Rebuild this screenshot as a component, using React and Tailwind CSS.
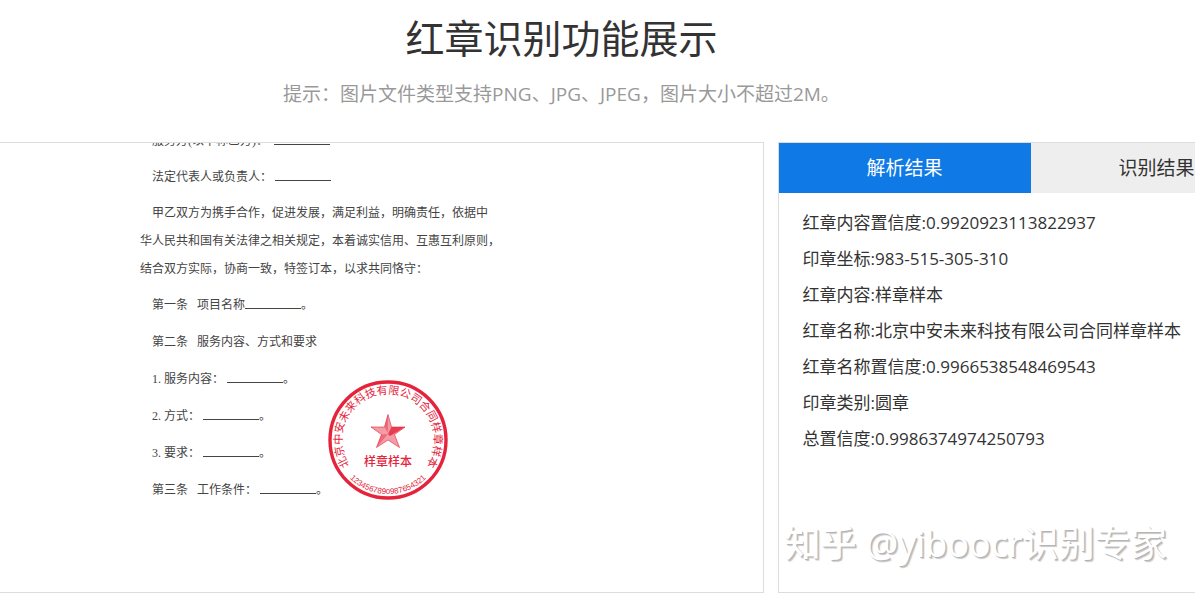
import clsx from 'clsx';

const tabs = ['解析结果', '识别结果'];

const results = [
    { label: '红章内容置信度', value: '0.9920923113822937' },
    { label: '印章坐标', value: '983-515-305-310' },
    { label: '红章内容', value: '样章样本' },
    { label: '红章名称', value: '北京中安未来科技有限公司合同样章样本' },
    { label: '红章名称置信度', value: '0.9966538548469543' },
    { label: '印章类别', value: '圆章' },
    { label: '总置信度', value: '0.9986374974250793' },
];

// Underlined space left open in the contract
const Blank = () => (
    <span className="inline-block w-14 h-3 border-b border-[#444]"></span>
);

const Seal = () => (
    <svg viewBox="0 0 120 120" className="w-[120px] h-[120px]" fill="#e5243b">
        <defs>
            <path id="seal-name" d="M 24.8 89.6 A 46 46 0 1 1 95.2 89.6" />
            <path id="seal-code" d="M 13.2 87 A 54 54 0 0 0 106.8 87" />
        </defs>
        <circle cx="60" cy="60" r="58" fill="none" stroke="#e5243b" strokeWidth="3.4" />
        <text fontSize="11">
            <textPath href="#seal-name" startOffset="50%" textAnchor="middle">北京中安未来科技有限公司合同样章样本</textPath>
        </text>
        <polygon
            points="60,34.5 63.5,47 77,47 66.5,54.5 71.5,67.5 60,60 48.5,67.5 53.5,54.5 43,47 56.5,47"
            fillOpacity="0.45"
            stroke="#e5243b"
            strokeOpacity="0.6"
            strokeWidth="1"
        />
        <path d="M60 54 L63.5 47 L77 47 L67 53 L62 56 Z" fillOpacity="0.8" />
        <path d="M60 53 L60 34.5 L56.5 47 Z M60 54 L48.5 67.5 L53.5 54.5 Z" fillOpacity="0.4" />
        <text x="60" y="86" fontSize="12" fontWeight="500" textAnchor="middle">样章样本</text>
        <text fontSize="8" className="font-['Liberation_Sans',sans-serif]">
            <textPath href="#seal-code" startOffset="50%" textAnchor="middle">1234567890987654321</textPath>
        </text>
    </svg>
);

const Contract = () => (
    <div className="relative pl-[140px] text-xs text-[#444] whitespace-nowrap font-['Liberation_Serif','Noto_Sans_CJK_SC',serif]">
        <div className="pl-3 -mt-3.5">
            <p className="h-[30px] leading-6">服务方(以下称乙方)：&nbsp; <Blank /></p>
            <p className="h-9 leading-9">法定代表人或负责人： <Blank /></p>
        </div>
        <div className="pt-1 pb-1 leading-7">
            <p className="pl-3">甲乙双方为携手合作，促进发展，满足利益，明确责任，依据中</p>
            <p>华人民共和国有关法律之相关规定，本着诚实信用、互惠互利原则，</p>
            <p>结合双方实际，协商一致，特签订本，以求共同恪守：</p>
        </div>
        <div className="pl-3 leading-9 flex flex-col gap-px">
            <p>第一条&nbsp;&nbsp; 项目名称<Blank />。</p>
            <p>第二条&nbsp;&nbsp; 服务内容、方式和要求</p>
            <p>1. 服务内容： <Blank />。</p>
            <p>2. 方式： <Blank />。</p>
            <p>3. 要求： <Blank />。</p>
            <p>第三条&nbsp;&nbsp; 工作条件： <Blank />。</p>
        </div>
        {/* Stamped over the contract text */}
        <div className="absolute left-[328px] bottom-2 font-['Noto_Sans_CJK_SC',sans-serif]">
            <Seal />
        </div>
    </div>
);

const App = () => {
    return (
        <div className="bg-white text-[#333] pr-1 overflow-hidden font-['Open_Sans','Noto_Sans_CJK_SC',sans-serif]">
            <header className="pt-2.5 pr-18 text-center">
                <h1 className="text-[39px] leading-14">红章识别功能展示</h1>
                <p className="mt-3.5 text-[19px] leading-7 text-[#999]">
                    提示：图片文件类型支持PNG、JPG、JPEG，图片大小不超过2M。
                </p>
            </header>

            <main className="mt-[34px] flex items-stretch gap-[14px] min-h-[451px]">
                <section className="w-[63.9%] shrink-0 border border-l-0 border-[#ddd] overflow-hidden">
                    <Contract />
                </section>

                <section className="relative flex-1 min-w-0 border border-r-0 border-[#ddd] overflow-hidden">
                    <div role="tablist" className="flex w-[504px]">
                        {tabs.map((tab, i) => (
                            <button
                                key={tab}
                                role="tab"
                                aria-selected={i === 0}
                                className={clsx(
                                    'w-1/2 h-[50px] text-[19px]',
                                    i === 0 ? 'bg-[#0f7ae5] text-white' : 'bg-[#eee] text-[#333]'
                                )}
                            >
                                {tab}
                            </button>
                        ))}
                    </div>
                    <ul className="pt-3 pl-6 text-[17px] leading-9 whitespace-nowrap">
                        {results.map((item) => (
                            <li key={item.label}>{item.label}:{item.value}</li>
                        ))}
                    </ul>
                    <p className="absolute left-1.5 bottom-5 text-4xl leading-14 text-white whitespace-nowrap [text-shadow:1px_1px_0_#b5b5b5,2px_2px_1px_#c8c8c8]">
                        <span className="font-medium">知乎</span> @yiboocr识别专家
                    </p>
                </section>
            </main>
        </div>
    );
};

export default App;
